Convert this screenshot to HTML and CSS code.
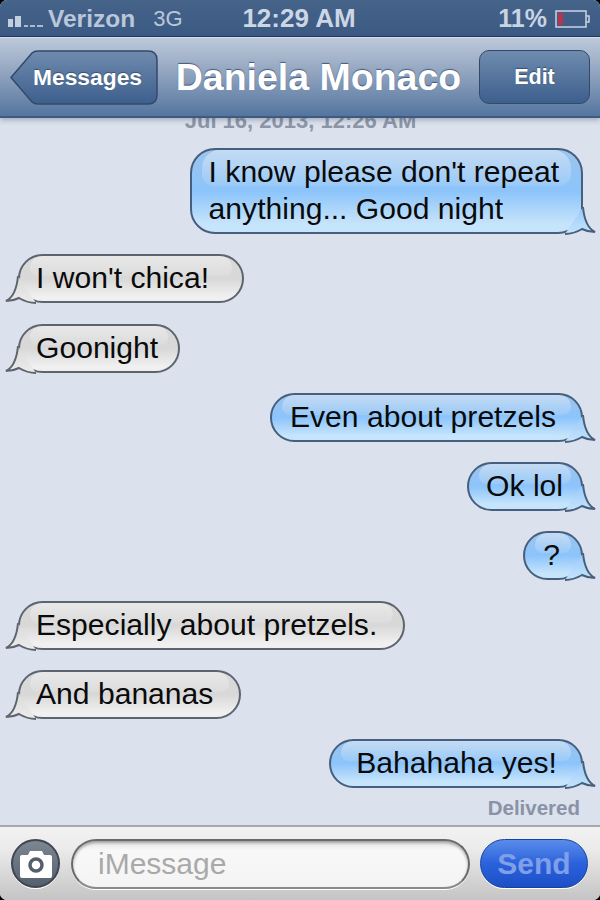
FILE: index.html
```html
<!DOCTYPE html>
<html lang="en">
<head>
  <meta charset="UTF-8" />
  <title>Daniela Monaco</title>
  <link rel="stylesheet" href="styles.css">
</head>
<body>
  <!-- shared bubble tails -->
  <svg class="tail-defs" width="0" height="0">
    <defs>
      <linearGradient id="tailBlue" x1="0" y1="0" x2="0" y2="1">
        <stop offset="0" stop-color="#96c8fb"/>
        <stop offset="1" stop-color="#c6e4fb"/>
      </linearGradient>
      <linearGradient id="tailGrey" x1="0" y1="0" x2="0" y2="1">
        <stop offset="0" stop-color="#dadada"/>
        <stop offset="1" stop-color="#ececec"/>
      </linearGradient>
    </defs>
    <symbol id="tail-sent" viewBox="0 0 32 34">
      <path d="M18 3C19 14 22 24 30 28C25 28 21 27 17 25C12 28 6 30 0 30Z" fill="url(#tailBlue)"/>
      <path d="M18 3C19 14 22 24 30 28C25 28 21 27 17 25C12 28 6 30 0 30" fill="none" stroke="#465f7c" stroke-width="2"/>
    </symbol>
    <symbol id="tail-received" viewBox="0 0 32 34">
      <path d="M18 3C19 14 22 24 30 28C25 28 21 27 17 25C12 28 6 30 0 30Z" fill="url(#tailGrey)"/>
      <path d="M18 3C19 14 22 24 30 28C25 28 21 27 17 25C12 28 6 30 0 30" fill="none" stroke="#5d646e" stroke-width="2"/>
    </symbol>
  </svg>

  <div class="phone">
    <div class="status-bar">
      <div class="carrier">
        <svg class="signal" width="36" height="12" viewBox="0 0 36 12">
          <rect x="0" y="4" width="5" height="8" fill="#c3cfdf"/>
          <rect x="7" y="1" width="6" height="11" fill="#c3cfdf"/>
          <rect x="16" y="10" width="4" height="2" fill="#a9b9ce"/>
          <rect x="22" y="10" width="5" height="2" fill="#a9b9ce"/>
          <rect x="29" y="10" width="6" height="2" fill="#a9b9ce"/>
        </svg>
        <span class="carrier-name">Verizon</span>
        <span class="network">3G</span>
      </div>
      <div class="clock">12:29 AM</div>
      <div class="battery">
        <span class="battery-pct">11%</span>
        <svg width="35" height="18" viewBox="0 0 35 18">
          <rect x="1" y="1" width="30" height="16" fill="none" stroke="#c9d4e3" stroke-width="1.5"/>
          <rect x="3" y="3" width="5" height="12" fill="#b8344a"/>
          <path d="M31 6h3v6h-3" fill="none" stroke="#c9d4e3" stroke-width="1.5"/>
        </svg>
      </div>
    </div>

    <div class="nav-bar">
      <div class="back-btn">
        <svg class="back-shape" width="148" height="55" viewBox="0 0 148 55">
          <defs>
            <linearGradient id="backFill" x1="0" y1="0" x2="0" y2="1">
              <stop offset="0" stop-color="#6f8bae"/>
              <stop offset="1" stop-color="#3d5f8d"/>
            </linearGradient>
          </defs>
          <path d="M1 27.500L22 3Q24 1 28 1H138Q147 1 147 10V45Q147 54 138 54H28Q24 54 22 52Z" fill="url(#backFill)" stroke="#33496a" stroke-width="1.500"/>
        </svg>
        <span class="back-label">Messages</span>
      </div>
      <div class="nav-title">Daniela Monaco</div>
      <div class="edit-btn">Edit</div>
    </div>

    <div class="thread">
      <div class="date-stamp">Jul 16, 2013, 12:26 AM</div>

      <div class="row sent">
        <div class="bubble two-line">I know please don't repeat<br>anything... Good night
          <svg class="tail"><use href="#tail-sent"/></svg>
        </div>
      </div>

      <div class="row received">
        <div class="bubble roomy">I won't chica!
          <svg class="tail"><use href="#tail-received"/></svg>
        </div>
      </div>

      <div class="row received">
        <div class="bubble snug">Goonight
          <svg class="tail"><use href="#tail-received"/></svg>
        </div>
      </div>

      <div class="row sent">
        <div class="bubble pad-right">Even about pretzels
          <svg class="tail"><use href="#tail-sent"/></svg>
        </div>
      </div>

      <div class="row sent">
        <div class="bubble">Ok lol
          <svg class="tail"><use href="#tail-sent"/></svg>
        </div>
      </div>

      <div class="row sent">
        <div class="bubble single-char">?
          <svg class="tail"><use href="#tail-sent"/></svg>
        </div>
      </div>

      <div class="row received">
        <div class="bubble">Especially about pretzels.
          <svg class="tail"><use href="#tail-received"/></svg>
        </div>
      </div>

      <div class="row received">
        <div class="bubble">And bananas
          <svg class="tail"><use href="#tail-received"/></svg>
        </div>
      </div>

      <div class="row sent">
        <div class="bubble pad-both">Bahahaha yes!
          <svg class="tail"><use href="#tail-sent"/></svg>
        </div>
      </div>

      <div class="delivered">Delivered</div>
    </div>

    <div class="composer">
      <div class="camera-btn">
        <svg width="34" height="28" viewBox="0 0 34 28">
          <path d="M1 7Q1 5 3 5H9L11 1H23L25 5H31Q33 5 33 7V26Q33 28 31 28H3Q1 28 1 26Z" fill="#fff"/>
          <circle cx="17" cy="15" r="6" fill="none" stroke="#555f6c" stroke-width="3.500"/>
        </svg>
      </div>
      <div class="message-input">iMessage</div>
      <div class="send-btn">Send</div>
    </div>
  </div>
</body>
</html>
```

FILE: styles.css
```css
body {
  margin: 0;
  background: #000;
  font-family: "Liberation Sans", Arial, sans-serif;
}

.tail-defs {
  position: absolute;
}

.phone {
  width: 600px;
  height: 900px;
  display: flex;
  flex-direction: column;
  overflow: hidden;
  border-radius: 7px;
  background: #dbe1ed;
}

/* status bar */
.status-bar {
  height: 37px;
  flex-shrink: 0;
  display: grid;
  grid-template-columns: 1fr auto 1fr;
  align-items: center;
  padding: 1px 10px 0 8px;
  box-sizing: border-box;
  background: linear-gradient(#466389, #3b5a83);
  border-bottom: 1px solid #23395a;
  color: #b9c7da;
}

.carrier {
  display: flex;
  align-items: center;
}

.signal {
  margin-top: 4px;
}

.carrier-name {
  margin-left: 4px;
  font-size: 24.500px;
  font-weight: bold;
}

.network {
  margin-left: 18px;
  font-size: 22px;
}

.clock {
  font-size: 26px;
  font-weight: bold;
  color: #ccd6e4;
}

.battery {
  display: flex;
  justify-content: flex-end;
  align-items: center;
  gap: 8px;
}

.battery-pct {
  font-size: 25px;
  font-weight: bold;
  color: #c9d4e3;
}

/* nav */
.nav-bar {
  position: relative;
  z-index: 2;
  height: 81px;
  flex-shrink: 0;
  display: flex;
  align-items: center;
  justify-content: space-between;
  padding: 0 10px;
  box-sizing: border-box;
  background: linear-gradient(#bdc9da, #8ca0bc 50%, #54759f);
  border-top: 1px solid #d5deea;
  border-bottom: 2px solid #3c5a82;
  box-shadow: 0 2px 5px rgba(60, 70, 90, 0.35);
}

.back-btn {
  position: relative;
  width: 148px;
  height: 55px;
  display: flex;
  align-items: center;
  justify-content: flex-end;
  flex-shrink: 0;
}

.back-shape {
  position: absolute;
  left: 0;
  top: 0;
}

.back-label {
  position: relative;
  padding-right: 16px;
  font-size: 22.800px;
  font-weight: bold;
  color: #fff;
  text-shadow: 0 -1px 1px #3a4f6e;
}

.nav-title {
  font-size: 37.500px;
  font-weight: bold;
  color: #fff;
  white-space: nowrap;
  text-shadow: 0 -1px 1px #44597a;
}

.edit-btn {
  width: 111px;
  height: 54px;
  flex-shrink: 0;
  box-sizing: border-box;
  display: flex;
  align-items: center;
  justify-content: center;
  font-size: 21.500px;
  font-weight: bold;
  color: #fff;
  text-shadow: 0 -1px 1px #3a4f6e;
  border: 1.500px solid #33496a;
  border-radius: 10px;
  background: linear-gradient(#6f8bae, #3d5f8d);
}

/* messages */
.thread {
  flex: 1;
  min-height: 0;
  overflow: hidden;
  display: flex;
  flex-direction: column;
  gap: 20.300px;
  padding: 0 17px 0 18px;
}

.date-stamp {
  height: 18.700px;
  margin-top: -9px;
  text-align: center;
  font-size: 22px;
  line-height: 24px;
  font-weight: bold;
  color: #8d96a6;
}

.row {
  display: flex;
}

.row.sent {
  justify-content: flex-end;
}

.bubble {
  position: relative;
  isolation: isolate;
  padding: 3px 18px 5px 17px;
  font-size: 30.100px;
  line-height: 37px;
  white-space: nowrap;
  color: #0a0a0a;
  border: 2px solid #465f7c;
  border-radius: 25px;
}

/* gloss sits between the background and the text */
.bubble::before {
  content: "";
  position: absolute;
  z-index: -1;
  top: 0;
  left: 10px;
  right: 10px;
  height: 44%;
  border-radius: 18px 18px 12px 12px;
  background: linear-gradient(rgba(255, 255, 255, 0.4), rgba(255, 255, 255, 0.1));
}

.sent .bubble {
  background: linear-gradient(#9cc4ec, #8cc4fb 50%, #c6e4fb 90%);
}

.received .bubble {
  padding: 3px 26px 5px 16px;
  border-color: #5d646e;
  background: linear-gradient(#d9d9d9, #d8d8d8 50%, #f0f0f0 90%);
}

.received .bubble.roomy {
  padding-right: 33px;
}

.received .bubble.snug {
  padding-right: 20px;
}

.sent .bubble.two-line {
  padding-right: 22px;
}

.sent .bubble.pad-right {
  padding-left: 18px;
  padding-right: 25px;
}

.sent .bubble.pad-both {
  padding-left: 25px;
  padding-right: 24px;
}

.sent .bubble.single-char {
  padding-left: 18px;
  padding-right: 21px;
}

.tail {
  position: absolute;
  z-index: 1;
  bottom: -6px;
  width: 32px;
  height: 34px;
  overflow: visible;
}

.sent .tail {
  right: -16px;
}

.received .tail {
  left: -16px;
  transform: scaleX(-1);
}

.delivered {
  margin-top: -13px;
  padding-right: 3px;
  text-align: right;
  font-size: 20.500px;
  font-weight: bold;
  color: #8a93a5;
}

/* composer */
.composer {
  height: 75px;
  flex-shrink: 0;
  box-sizing: border-box;
  display: flex;
  align-items: center;
  padding: 0 12px 0 11px;
  background: linear-gradient(#f2f2f2, #ebebeb 30%, #c4c4c4);
  border-top: 2px solid #a9a9ab;
}

.camera-btn {
  width: 49px;
  height: 49px;
  flex-shrink: 0;
  box-sizing: border-box;
  display: flex;
  align-items: center;
  justify-content: center;
  border-radius: 50%;
  border: 2px solid #3f4650;
  background: linear-gradient(#7d8793, #55606f);
  box-shadow: 0 1px 0 #fff;
}

.message-input {
  flex: 1;
  height: 50px;
  margin: 0 10px 0 11px;
  padding-left: 25px;
  box-sizing: border-box;
  border: 2px solid #6a6a6a;
  border-bottom-color: #8a8a8a;
  border-radius: 25px;
  font-size: 30px;
  line-height: 46px;
  color: #a9a9a9;
  background: linear-gradient(#e4e4e4, #f8f8f8 20%, #f4f4f4);
  box-shadow: inset 0 2px 3px rgba(0, 0, 0, 0.3), 0 1px 0 #fff;
}

.send-btn {
  width: 108px;
  height: 49px;
  flex-shrink: 0;
  box-sizing: border-box;
  display: flex;
  align-items: center;
  justify-content: center;
  border: 1.500px solid #17439c;
  border-radius: 25px;
  font-size: 30px;
  font-weight: bold;
  color: #7f9fe8;
  background: linear-gradient(#5b8cea, #2a62dc 50%, #1c4fc6);
  box-shadow: 0 1px 0 #fff;
}
```
